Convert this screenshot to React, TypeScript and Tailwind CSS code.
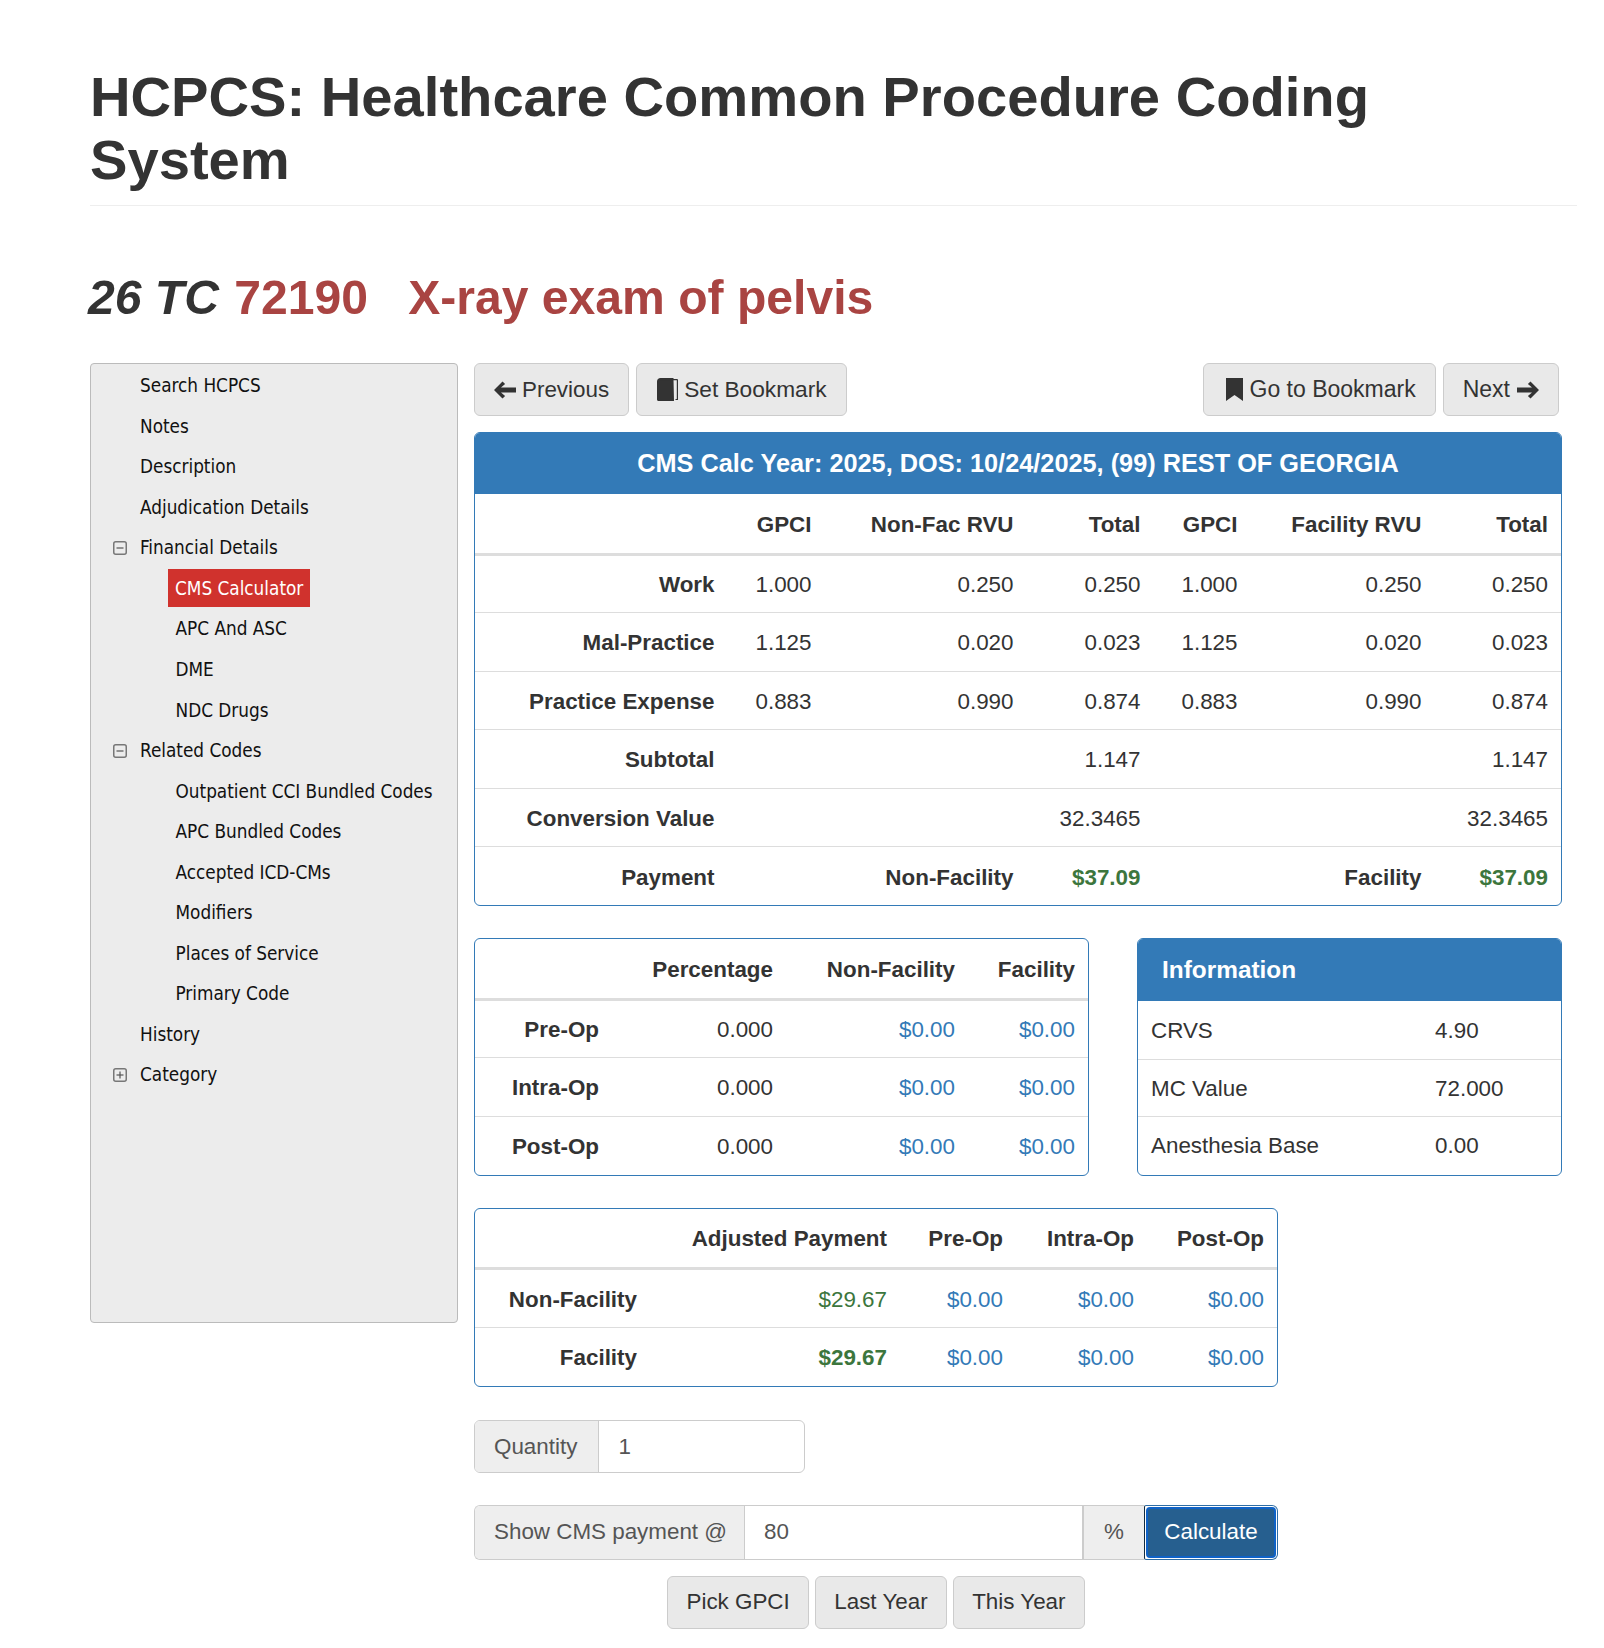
import type { ReactNode } from "react";

// ─── Data ─────────────────────────────────────────────────────────────────────

type NavItem = { label: string; level: 0 | 1; toggle?: "minus" | "plus"; active?: boolean };

const navItems: NavItem[] = [
    { label: "Search HCPCS", level: 0 },
    { label: "Notes", level: 0 },
    { label: "Description", level: 0 },
    { label: "Adjudication Details", level: 0 },
    { label: "Financial Details", level: 0, toggle: "minus" },
    { label: "CMS Calculator", level: 1, active: true },
    { label: "APC And ASC", level: 1 },
    { label: "DME", level: 1 },
    { label: "NDC Drugs", level: 1 },
    { label: "Related Codes", level: 0, toggle: "minus" },
    { label: "Outpatient CCI Bundled Codes", level: 1 },
    { label: "APC Bundled Codes", level: 1 },
    { label: "Accepted ICD-CMs", level: 1 },
    { label: "Modifiers", level: 1 },
    { label: "Places of Service", level: 1 },
    { label: "Primary Code", level: 1 },
    { label: "History", level: 0 },
    { label: "Category", level: 0, toggle: "plus" },
];

const calcRows = [
    ["Work", "1.000", "0.250", "0.250", "1.000", "0.250", "0.250"],
    ["Mal-Practice", "1.125", "0.020", "0.023", "1.125", "0.020", "0.023"],
    ["Practice Expense", "0.883", "0.990", "0.874", "0.883", "0.990", "0.874"],
    ["Subtotal", "", "", "1.147", "", "", "1.147"],
    ["Conversion Value", "", "", "32.3465", "", "", "32.3465"],
];

// ─── Icons ────────────────────────────────────────────────────────────────────

function ArrowIcon({ dir }: { dir: "left" | "right" }) {
    return (
        <svg viewBox="0 0 22 18" className={`w-[22px] h-[18px] fill-[#333] ${dir === "right" ? "rotate-180" : ""}`}>
            <path d="M0 9 8.5.5l2.6 2.6L7 6.6h15v4.8H7l4.1 3.5-2.6 2.6z" />
        </svg>
    );
}

function BookIcon() {
    return (
        <svg viewBox="0 0 21 23" className="ml-[1px] w-[21px] h-[23px] fill-[#333]">
            <path d="M0 3.5C0 1.5 1.5 0 3.5 0H16.500v1L17 23H2C1 23 0 22.500 0 21.500z" />
            <path d="M3 1h17a1 1 0 0 1 1 1v20h-2.500v-1h1.300V2.300H3z" />
        </svg>
    );
}

function BookmarkIcon() {
    return (
        <svg viewBox="0 0 17 23" className="ml-[3px] mr-[1px] w-[17px] h-[23px] fill-[#333]">
            <path d="M0 0h17v23l-8.500-6L0 23z" />
        </svg>
    );
}

function TreeToggle({ kind }: { kind: "minus" | "plus" }) {
    return (
        <svg viewBox="0 0 14 14" className="w-[14px] h-[14px]">
            <rect x="0.75" y="0.75" width="12.5" height="12.5" rx="2" fill="none" stroke="#777" strokeWidth="1.5" />
            <path d="M3.500 7h7" stroke="#555" strokeWidth="1.200" />
            {kind === "plus" && <path d="M7 3.500v7" stroke="#555" strokeWidth="1.200" />}
        </svg>
    );
}

// ─── Sub-components ───────────────────────────────────────────────────────────

function Btn({ children, className = "text-[22.400px] px-[19px]" }: { children: ReactNode; className?: string }) {
    return (
        <button className={`h-[53px] flex items-center gap-[6px] rounded-[6px] border border-[#ccc] bg-[#e9e9e9] text-[#333] ${className}`}>
            {children}
        </button>
    );
}

function Addon({ children, className = "" }: { children: ReactNode; className?: string }) {
    return <div className={`flex items-center bg-[#eee] text-[#555] border-[#ccc] ${className}`}>{children}</div>;
}

function Sidebar() {
    return (
        <div className="w-[368px] h-[960px] pt-[2px] shrink-0 rounded-[4px] border border-[#bbb] bg-[#ececec] font-['DejaVu_Sans',sans-serif] font-stretch-condensed text-[18.800px] text-[#111]">
            {navItems.map((item) => (
                <div key={item.label} className="h-[40.550px] relative flex items-center">
                    {item.toggle && (
                        <span className="absolute left-[22px] top-[13px] flex">
                            <TreeToggle kind={item.toggle} />
                        </span>
                    )}
                    <span
                        className={
                            item.level === 0
                                ? "ml-[49px] whitespace-nowrap"
                                : item.active
                                  ? "ml-[77px] mb-[2px] pt-[2px] px-[7px] h-[38px] flex items-center bg-[#d0322d] text-white whitespace-nowrap"
                                  : "ml-[84.500px] whitespace-nowrap"
                        }
                    >
                        {item.label}
                    </span>
                </div>
            ))}
        </div>
    );
}

const th = "px-[13px] pt-[3px] h-[60px] text-right font-bold border-b-[3px] border-[#ddd]";
const td = "px-[13px] pt-[3px] h-[58.500px] text-right border-t border-[#ddd]";

function CalcTable() {
    return (
        <div className="rounded-[6px] border border-[#337ab7] overflow-hidden">
            <div className="h-[61px] bg-[#337ab7] text-white font-bold text-[25.300px] flex items-center justify-center">
                CMS Calc Year: 2025, DOS: 10/24/2025, (99) REST OF GEORGIA
            </div>
            <table className="w-full table-fixed border-collapse">
                <colgroup>
                    <col className="w-[252.500px]" />
                    <col className="w-[97px]" />
                    <col className="w-[202px]" />
                    <col className="w-[127px]" />
                    <col className="w-[97px]" />
                    <col className="w-[184px]" />
                    <col />
                </colgroup>
                <thead>
                    <tr>
                        {["", "GPCI", "Non-Fac RVU", "Total", "GPCI", "Facility RVU", "Total"].map((h, i) => (
                            <th key={i} className={th}>{h}</th>
                        ))}
                    </tr>
                </thead>
                <tbody>
                    {calcRows.map((row) => (
                        <tr key={row[0]}>
                            {row.map((cell, i) => (
                                <td key={i} className={`${td} ${i === 0 ? "font-bold" : ""}`}>{cell}</td>
                            ))}
                        </tr>
                    ))}
                    <tr>
                        <td className={`${td} font-bold`}>Payment</td>
                        <td className={td} />
                        <td className={`${td} font-bold`}>Non-Facility</td>
                        <td className={`${td} font-bold text-[#3c763d]`}>$37.09</td>
                        <td className={td} />
                        <td className={`${td} font-bold`}>Facility</td>
                        <td className={`${td} font-bold text-[#3c763d]`}>$37.09</td>
                    </tr>
                </tbody>
            </table>
        </div>
    );
}

function SplitTable() {
    return (
        <div className="w-[615px] rounded-[6px] border border-[#337ab7] overflow-hidden">
            <table className="w-full table-fixed border-collapse">
                <colgroup>
                    <col className="w-[137px]" />
                    <col className="w-[174px]" />
                    <col className="w-[182px]" />
                    <col />
                </colgroup>
                <thead>
                    <tr>
                        {["", "Percentage", "Non-Facility", "Facility"].map((h, i) => (
                            <th key={i} className={th}>{h}</th>
                        ))}
                    </tr>
                </thead>
                <tbody>
                    {["Pre-Op", "Intra-Op", "Post-Op"].map((label) => (
                        <tr key={label}>
                            <td className={`${td} font-bold`}>{label}</td>
                            <td className={td}>0.000</td>
                            <td className={`${td} text-[#337ab7]`}>$0.00</td>
                            <td className={`${td} text-[#337ab7]`}>$0.00</td>
                        </tr>
                    ))}
                </tbody>
            </table>
        </div>
    );
}

function InfoPanel() {
    const rows = [
        ["CRVS", "4.90"],
        ["MC Value", "72.000"],
        ["Anesthesia Base", "0.00"],
    ];
    return (
        <div className="w-[425px] rounded-[6px] border border-[#337ab7] overflow-hidden">
            <div className="h-[62px] px-[24px] bg-[#337ab7] text-white font-bold text-[24.400px] flex items-center">Information</div>
            {rows.map(([k, v], i) => (
                <div key={k} className={`h-[57.500px] px-[13px] pt-[2px] flex items-center ${i > 0 ? "border-t border-[#ddd]" : ""}`}>
                    <span className="w-[284px]">{k}</span>
                    <span>{v}</span>
                </div>
            ))}
        </div>
    );
}

function AdjustedTable() {
    return (
        <div className="w-[804px] rounded-[6px] border border-[#337ab7] overflow-hidden">
            <table className="w-full table-fixed border-collapse">
                <colgroup>
                    <col className="w-[175px]" />
                    <col className="w-[250px]" />
                    <col className="w-[116px]" />
                    <col className="w-[131px]" />
                    <col />
                </colgroup>
                <thead>
                    <tr>
                        {["", "Adjusted Payment", "Pre-Op", "Intra-Op", "Post-Op"].map((h, i) => (
                            <th key={i} className={th}>{h}</th>
                        ))}
                    </tr>
                </thead>
                <tbody>
                    {["Non-Facility", "Facility"].map((label, idx) => (
                        <tr key={label}>
                            <td className={`${td} font-bold`}>{label}</td>
                            <td className={`${td} text-[#3c763d] ${idx === 1 ? "font-bold" : ""}`}>$29.67</td>
                            <td className={`${td} text-[#337ab7]`}>$0.00</td>
                            <td className={`${td} text-[#337ab7]`}>$0.00</td>
                            <td className={`${td} text-[#337ab7]`}>$0.00</td>
                        </tr>
                    ))}
                </tbody>
            </table>
        </div>
    );
}

// ─── App ──────────────────────────────────────────────────────────────────────

export default function App() {
    return (
        <div className="w-[1604px] h-[1648px] bg-white font-['Liberation_Sans',Arial,sans-serif] text-[22.400px] text-[#333] pl-[90px] pt-[65px] overflow-hidden">
            <div className="w-[1487px] border-b border-[#eee] pb-[14px]">
                <h1 className="text-[56.150px] leading-[63px] font-bold">HCPCS: Healthcare Common Procedure Coding System</h1>
            </div>
            <h2 className="mt-[63px] text-[48.100px] leading-[56px] font-bold text-[#a94442] whitespace-pre">
                <i className="-ml-[2px] mr-[2px] text-[#333]">26 TC</i> 72190{"   "}X-ray exam of pelvis
            </h2>

            <div className="mt-[38px] flex gap-[16px]">
                <Sidebar />
                <div className="w-[1088px]">
                    <div className="flex justify-between">
                        <div className="flex gap-[7px]">
                            <Btn><ArrowIcon dir="left" />Previous</Btn>
                            <Btn className="text-[22.700px] px-[19px]"><BookIcon />Set Bookmark</Btn>
                        </div>
                        <div className="flex gap-[7px] mr-[3px]">
                            <Btn className="text-[23px] px-[19px]"><BookmarkIcon />Go to Bookmark</Btn>
                            <Btn className="text-[23px] px-[19px] gap-[7px]">Next<ArrowIcon dir="right" /></Btn>
                        </div>
                    </div>

                    <div className="mt-[16px]"><CalcTable /></div>

                    <div className="mt-[32px] flex justify-between">
                        <SplitTable />
                        <InfoPanel />
                    </div>

                    <div className="mt-[32px]"><AdjustedTable /></div>

                    <div className="mt-[33px] w-[331px] h-[53px] flex rounded-[6px] border border-[#ccc] overflow-hidden">
                        <Addon className="pl-[19px] pr-[21px] pt-[1px] border-r">Quantity</Addon>
                        <div className="flex-1 flex items-center px-[19px] pt-[1px] text-[#555]">1</div>
                    </div>

                    <div className="mt-[32px] w-[804px] h-[55px] flex">
                        <div className="flex-1 flex rounded-l-[6px] border border-r-0 border-[#ccc] overflow-hidden">
                            <Addon className="pl-[19px] pr-[17px] border-r">Show CMS payment @</Addon>
                            <div className="flex-1 flex items-center px-[19px] text-[#555]">80</div>
                            <Addon className="w-[62px] justify-center border-l-2">%</Addon>
                        </div>
                        <button className="w-[134px] rounded-r-[6px] rounded-l-[2px] border border-[#2e6da4] border-l-[#122b40] p-[1px] bg-white">
                            <span className="h-full flex items-center justify-center rounded-[4px] bg-[#265f8f] border-2 border-[#0f62c6] text-white text-[22.400px]">Calculate</span>
                        </button>
                    </div>

                    <div className="mt-[16px] w-[804px] flex justify-center gap-[5.500px]">
                        <Btn className="text-[22.400px] px-[18.500px]">Pick GPCI</Btn>
                        <Btn className="text-[22.400px] px-[18.500px]">Last Year</Btn>
                        <Btn className="text-[22.400px] px-[18.500px]">This Year</Btn>
                    </div>
                </div>
            </div>
        </div>
    );
}
